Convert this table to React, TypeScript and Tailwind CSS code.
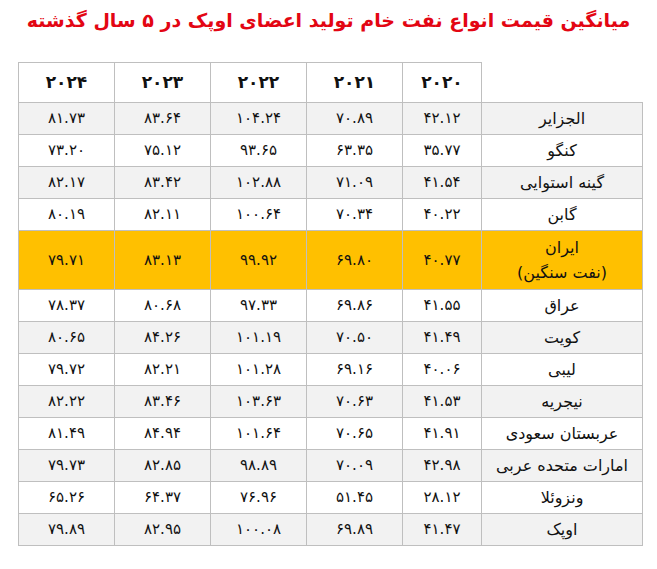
const years = ["۲۰۲۰", "۲۰۲۱", "۲۰۲۲", "۲۰۲۳", "۲۰۲۴"];

type Row = { name: string; sub?: string; values: string[]; highlight?: boolean };

const rows: Row[] = [
  { name: "الجزایر", values: ["۴۲.۱۲", "۷۰.۸۹", "۱۰۴.۲۴", "۸۳.۶۴", "۸۱.۷۳"] },
  { name: "کنگو", values: ["۳۵.۷۷", "۶۳.۳۵", "۹۳.۶۵", "۷۵.۱۲", "۷۳.۲۰"] },
  { name: "گینه استوایی", values: ["۴۱.۵۴", "۷۱.۰۹", "۱۰۲.۸۸", "۸۳.۴۲", "۸۲.۱۷"] },
  { name: "گابن", values: ["۴۰.۲۲", "۷۰.۳۴", "۱۰۰.۶۴", "۸۲.۱۱", "۸۰.۱۹"] },
  { name: "ایران", sub: "(نفت سنگین)", values: ["۴۰.۷۷", "۶۹.۸۰", "۹۹.۹۲", "۸۳.۱۳", "۷۹.۷۱"], highlight: true },
  { name: "عراق", values: ["۴۱.۵۵", "۶۹.۸۶", "۹۷.۳۳", "۸۰.۶۸", "۷۸.۳۷"] },
  { name: "کویت", values: ["۴۱.۴۹", "۷۰.۵۰", "۱۰۱.۱۹", "۸۴.۲۶", "۸۰.۶۵"] },
  { name: "لیبی", values: ["۴۰.۰۶", "۶۹.۱۶", "۱۰۱.۲۸", "۸۲.۲۱", "۷۹.۷۲"] },
  { name: "نیجریه", values: ["۴۱.۵۳", "۷۰.۶۳", "۱۰۳.۶۳", "۸۳.۴۶", "۸۲.۲۲"] },
  { name: "عربستان سعودی", values: ["۴۱.۹۱", "۷۰.۶۵", "۱۰۱.۶۴", "۸۴.۹۴", "۸۱.۴۹"] },
  { name: "امارات متحده عربی", values: ["۴۲.۹۸", "۷۰.۰۹", "۹۸.۸۹", "۸۲.۸۵", "۷۹.۷۳"] },
  { name: "ونزوئلا", values: ["۲۸.۱۲", "۵۱.۴۵", "۷۶.۹۶", "۶۴.۳۷", "۶۵.۲۶"] },
  { name: "اوپک", values: ["۴۱.۴۷", "۶۹.۸۹", "۱۰۰.۰۸", "۸۲.۹۵", "۷۹.۸۹"] },
];

const colWidths = ["w-[161px]", "w-[79px]", "w-[96px]", "w-[96px]", "w-[96px]", "w-[96px]"];

export default function App() {
  return (
    <div dir="rtl" className="w-[657px] h-[569px] bg-white text-[#111] font-['DejaVu_Sans',sans-serif]">
      <h1 className="pt-[4px] text-center text-[19px] font-bold leading-[32px] whitespace-nowrap text-[#e30613]">
        میانگین قیمت انواع نفت خام تولید اعضای اوپک در ۵ سال گذشته
      </h1>

      <div className="pt-[26px] pr-[14px]">
        <table className="w-[623px] table-fixed border-collapse text-center text-[15px]">
          <colgroup>
            {colWidths.map((w, i) => (
              <col key={i} className={w} />
            ))}
          </colgroup>
          <thead>
            <tr className="h-[40px]">
              <th className="border-b border-[#bfbfbf]" />
              {years.map((y) => (
                <th key={y} className="border border-[#bfbfbf] text-[17px] font-bold">
                  {y}
                </th>
              ))}
            </tr>
          </thead>
          <tbody>
            {rows.map((r, i) => {
              const bg = r.highlight ? "bg-[#ffc000]" : i % 2 === 0 ? "bg-[#f2f2f2]" : "bg-white";
              return (
                <tr key={r.name} className={`${bg} ${r.sub ? "h-[59px]" : "h-[32px]"}`}>
                  <td className="border border-[#bfbfbf] text-[16px] leading-[25px]">
                    <div>{r.name}</div>
                    {r.sub && <div>{r.sub}</div>}
                  </td>
                  {r.values.map((v, j) => (
                    <td key={j} className="border border-[#bfbfbf]">
                      {v}
                    </td>
                  ))}
                </tr>
              );
            })}
          </tbody>
        </table>
      </div>
    </div>
  );
}
